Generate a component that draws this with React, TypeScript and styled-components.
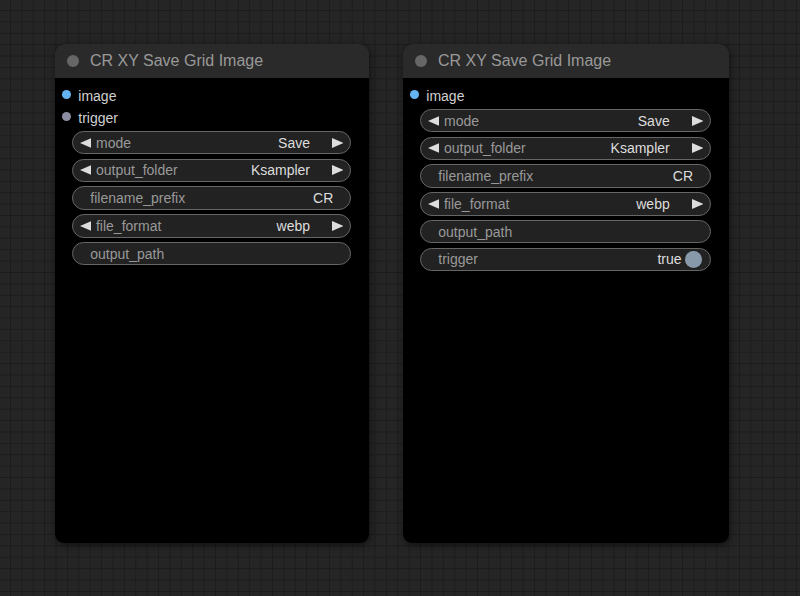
import React from "react";
import styled, { createGlobalStyle } from "styled-components";

const GlobalStyle = createGlobalStyle`
  html, body { margin: 0; padding: 0; background: #242424; }
  body { font-family: "Liberation Sans", Arial, sans-serif; }
`;

const Canvas = styled.div`
  position: relative;
  width: 800px;
  height: 596px;
  overflow: hidden;
  background-color: #252525;
  background-image:
    linear-gradient(to right, #1c1c1c 1px, transparent 1px),
    linear-gradient(to bottom, #1c1c1c 1px, transparent 1px);
  background-size: 11.4px 11.4px;
  background-position: 10px 10px;
`;

const Node = styled.div<{ $x: number; $y: number; $w: number; $h: number }>`
  position: absolute;
  left: ${(p) => p.$x}px;
  top: ${(p) => p.$y}px;
  width: ${(p) => p.$w}px;
  height: ${(p) => p.$h}px;
  display: flex;
  flex-direction: column;
  background: #000;
  border-radius: 9px;
  box-shadow: 1px 2px 7px rgba(0, 0, 0, 0.55);
  overflow: hidden;
`;

const TitleBar = styled.div`
  height: 33.7px;
  flex: none;
  display: flex;
  align-items: center;
  gap: 11.4px;
  padding-left: 11.3px;
  background: #2a2a2a;
`;

const TitleDot = styled.span`
  width: 12px;
  height: 12px;
  border-radius: 50%;
  background: #666;
  flex: none;
`;

const TitleText = styled.span`
  font-size: 16px;
  color: #999;
  white-space: nowrap;
`;

const Body = styled.div`
  flex: 1;
  display: flex;
  flex-direction: column;
  padding: 7px 18.3px 0 0;
`;

const SlotRow = styled.div`
  height: 22px;
  display: flex;
  align-items: center;
  gap: 7.5px;
  padding-left: 6.5px;
`;

const SlotDot = styled.span<{ $color: string }>`
  width: 9px;
  height: 9px;
  border-radius: 50%;
  background: ${(p) => p.$color};
  flex: none;
  margin-top: -2px;
`;

const SlotLabel = styled.span`
  font-size: 14px;
  color: #d0d0d0;
`;

const WidgetList = styled.div`
  display: flex;
  flex-direction: column;
  gap: 4.25px;
  margin: 2.3px 0 0 16.7px;
`;

const Widget = styled.div<{ $kind: "combo" | "text" | "toggle" }>`
  box-sizing: border-box;
  height: 23.5px;
  display: flex;
  align-items: center;
  border: 1px solid #666;
  border-radius: 12px;
  background: #222;
  font-size: 14px;
  padding: ${(p) =>
    p.$kind === "combo"
      ? "0 6.6px 0 6.6px"
      : p.$kind === "toggle"
      ? "0 8px 0 17.3px"
      : "0 16.7px 0 17.3px"};
`;

const WidgetLabel = styled.span<{ $arrow?: boolean }>`
  flex: 1;
  color: #999;
  white-space: nowrap;
  margin-left: ${(p) => (p.$arrow ? "5px" : "0")};
`;

const WidgetValue = styled.span<{ $arrow?: boolean; $toggle?: boolean }>`
  color: #ddd;
  white-space: nowrap;
  margin-right: ${(p) => (p.$arrow ? "22px" : p.$toggle ? "3.5px" : "0")};
`;

const ToggleKnob = styled.span`
  width: 16.7px;
  height: 16.7px;
  border-radius: 50%;
  background: #8899aa;
  flex: none;
`;

const ArrowSvg = styled.svg`
  width: 11.4px;
  height: 10px;
  flex: none;
  display: block;
`;

const Arrow = ({ dir }: { dir: "left" | "right" }) => (
  <ArrowSvg viewBox="0 0 11.4 10">
    {dir === "left" ? (
      <polygon points="0,5 11.4,0 11.4,10" fill="#ddd" />
    ) : (
      <polygon points="11.4,5 0,0 0,10" fill="#ddd" />
    )}
  </ArrowSvg>
);

type W =
  | { kind: "combo"; label: string; value: string }
  | { kind: "text"; label: string; value: string }
  | { kind: "toggle"; label: string; value: string };

const WidgetRow = ({ w }: { w: W }) => {
  if (w.kind === "combo") {
    return (
      <Widget $kind="combo">
        <Arrow dir="left" />
        <WidgetLabel $arrow>{w.label}</WidgetLabel>
        <WidgetValue $arrow>{w.value}</WidgetValue>
        <Arrow dir="right" />
      </Widget>
    );
  }
  if (w.kind === "toggle") {
    return (
      <Widget $kind="toggle">
        <WidgetLabel>{w.label}</WidgetLabel>
        <WidgetValue $toggle>{w.value}</WidgetValue>
        <ToggleKnob />
      </Widget>
    );
  }
  return (
    <Widget $kind="text">
      <WidgetLabel>{w.label}</WidgetLabel>
      <WidgetValue>{w.value}</WidgetValue>
    </Widget>
  );
};

type NodeDef = {
  x: number;
  y: number;
  w: number;
  h: number;
  slots: { name: string; color: string }[];
  widgets: W[];
};

const baseWidgets: W[] = [
  { kind: "combo", label: "mode", value: "Save" },
  { kind: "combo", label: "output_folder", value: "Ksampler" },
  { kind: "text", label: "filename_prefix", value: "CR" },
  { kind: "combo", label: "file_format", value: "webp" },
  { kind: "text", label: "output_path", value: "" },
];

const nodes: NodeDef[] = [
  {
    x: 55.3,
    y: 44,
    w: 314,
    h: 498.7,
    slots: [
      { name: "image", color: "#64b4f4" },
      { name: "trigger", color: "#8c8ca2" },
    ],
    widgets: baseWidgets,
  },
  {
    x: 403.3,
    y: 44,
    w: 325.7,
    h: 498.7,
    slots: [{ name: "image", color: "#64b4f4" }],
    widgets: [...baseWidgets, { kind: "toggle", label: "trigger", value: "true" }],
  },
];

export default function App() {
  return (
    <>
      <GlobalStyle />
      <Canvas>
        {nodes.map((n, i) => (
          <Node key={i} $x={n.x} $y={n.y} $w={n.w} $h={n.h}>
            <TitleBar>
              <TitleDot />
              <TitleText>CR XY Save Grid Image</TitleText>
            </TitleBar>
            <Body>
              {n.slots.map((s) => (
                <SlotRow key={s.name}>
                  <SlotDot $color={s.color} />
                  <SlotLabel>{s.name}</SlotLabel>
                </SlotRow>
              ))}
              <WidgetList>
                {n.widgets.map((w) => (
                  <WidgetRow key={w.label} w={w} />
                ))}
              </WidgetList>
            </Body>
          </Node>
        ))}
      </Canvas>
    </>
  );
}
